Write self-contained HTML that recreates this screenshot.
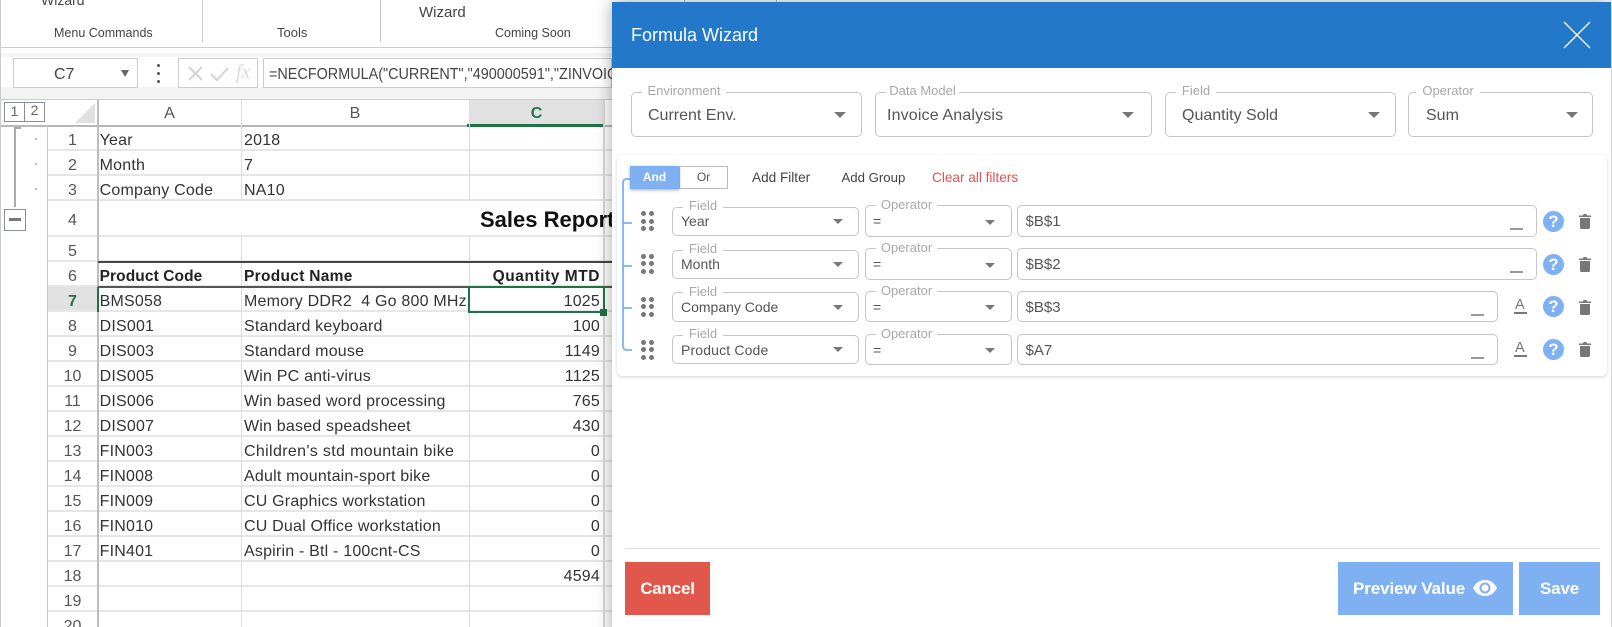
<!DOCTYPE html>
<html><head><meta charset="utf-8"><style>
html{margin:0;padding:0;background:#fff;overflow:hidden;width:1612px;height:627px}
body{margin:0;padding:0;background:#fff;position:relative;width:1612px;height:627px;overflow:hidden;font-family:"Liberation Sans",sans-serif;color:#333}
#w{position:absolute;left:0;top:0;width:1612px;height:627px;overflow:hidden}
.x{position:absolute}
.t{position:absolute;white-space:pre;line-height:1}
.r{position:absolute;left:48px;width:564px;height:25px;line-height:29px;border-bottom:2px solid #e6e6e6;box-sizing:border-box;font-size:16px;letter-spacing:.2px;color:#333}
.r span{position:absolute;white-space:pre;top:0}
.n{left:0;width:49px;text-align:center;color:#555;letter-spacing:0}
.a{left:51.6px}.b{left:196px}.c{right:12px;text-align:right}
.hb{font-weight:bold;font-size:15.5px;letter-spacing:.05px;color:#222}
.box{position:absolute;border:1.5px solid #c6c6c6;border-radius:5px;box-sizing:border-box;background:#fff}
.lb{position:absolute;background:#fff;color:#a8a8a8;font-size:13px;line-height:14px;white-space:pre;text-align:center;height:10px}
.lb i{font-style:normal;position:relative;top:-1px}
.lb.top i{top:-2px}
.v{position:absolute;white-space:pre;color:#555;line-height:1}
.ar{position:absolute;width:0;height:0;border-left:6px solid transparent;border-right:6px solid transparent;border-top:6px solid #777}
.sa{border-left-width:5.5px;border-right-width:5.5px;border-top-width:5.5px}
.d{position:absolute;width:5px;height:5px;border-radius:50%;background:#777}
.us{position:absolute;width:13px;height:2px;background:#999}
.lk{position:absolute;white-space:pre;font-size:13.6px;line-height:1;color:#444}
.btn{position:absolute;color:#fff;font-weight:bold;font-size:17px;line-height:53px;text-align:center;top:562px;height:53px;letter-spacing:-.2px}
.h{position:absolute;text-align:center;line-height:30px;font-size:16px;color:#555;top:99px;height:27px}
.q{position:absolute;left:1543px;width:21px;height:21px;border-radius:50%;background:#7eb0f2;color:#fff;font-size:17px;font-weight:bold;line-height:21px;text-align:center}
</style></head><body><div id="w">

<!-- ribbon -->
<div class="x" style="left:0;top:0;width:1px;height:627px;background:#ccc"></div>
<div class="x" style="left:202px;top:0;width:1px;height:42px;background:#c8c8c8"></div>
<div class="x" style="left:380px;top:0;width:1px;height:42px;background:#c8c8c8"></div>
<div class="x" style="left:0;top:47px;width:612px;height:1px;background:#ccc"></div>
<div class="t" style="left:41px;top:-7px;font-size:14px;color:#444">Wizard</div>
<div class="t" style="left:419px;top:5px;font-size:15px;color:#444">Wizard</div>
<div class="t" style="left:54px;top:27px;font-size:12.5px;color:#444">Menu Commands</div>
<div class="t" style="left:277px;top:26px;font-size:13px;color:#444">Tools</div>
<div class="t" style="left:495px;top:27px;font-size:12.5px;color:#444">Coming Soon</div>

<!-- formula bar -->
<div class="x" style="left:1px;top:53px;width:611px;height:4px;background:#f5f5f5"></div>
<div class="x" style="left:1px;top:87px;width:611px;height:12px;background:#f3f3f3"></div>
<div class="x" style="left:1px;top:99px;width:611px;height:1px;background:#ccc"></div>
<div class="x" style="left:13px;top:58px;width:125px;height:30px;border:1px solid #ccc;box-sizing:border-box"></div>
<div class="t" style="left:54px;top:67px;font-size:16px;color:#444">C7</div>
<div class="ar" style="left:121px;top:70px;border-left-width:4.5px;border-right-width:4.5px;border-top-width:7px;border-top-color:#666"></div>
<div class="d" style="left:156.5px;top:63.5px;width:3px;height:3px;background:#555"></div>
<div class="d" style="left:156.5px;top:71.5px;width:3px;height:3px;background:#555"></div>
<div class="d" style="left:156.5px;top:79.5px;width:3px;height:3px;background:#555"></div>
<div class="x" style="left:178px;top:58px;width:80px;height:30px;border:1px solid #ccc;box-sizing:border-box"></div>
<svg class="x" style="left:178px;top:58px" width="80" height="30"><path d="M11 9l13 13M24 9L11 22" stroke="#d4d4d4" stroke-width="2" fill="none"/><path d="M33 16l6 6 11-12" stroke="#d4d4d4" stroke-width="2" fill="none"/></svg>
<div class="t" style="left:236px;top:62px;font-size:20px;font-family:'Liberation Serif',serif;font-style:italic;color:#d3dbe6">fx</div>
<div class="x" style="left:263px;top:58px;width:349px;height:30px;border:1px solid #ccc;box-sizing:border-box"></div>
<div class="t" style="left:268.5px;top:65.5px;font-size:16px;color:#444;width:385px;overflow:hidden;line-height:18px;transform:scaleX(.9);transform-origin:0 0">=NECFORMULA("CURRENT","490000591","ZINVOICE</div>

<!-- grid header -->
<div class="x" style="left:4px;top:102px;width:21px;height:20px;border:1px solid #8a8f96;box-sizing:border-box;text-align:center;font-size:14px;line-height:17px;color:#666">1</div>
<div class="x" style="left:24px;top:102px;width:21px;height:20px;border:1px solid #8a8f96;box-sizing:border-box;text-align:center;font-size:14px;line-height:15px;color:#666">2</div>
<svg class="x" style="left:48px;top:100px" width="48" height="26"><path d="M47 3V23H27z" fill="#e0e0e0"/></svg>
<div class="x" style="left:469px;top:100px;width:135px;height:25px;background:#e1e1e1"></div>
<div class="h" style="left:98px;width:143px">A</div>
<div class="h" style="left:241px;width:228px">B</div>
<div class="h" style="left:469px;width:135px;font-weight:bold;color:#217346">C</div>
<div class="x" style="left:1px;top:125px;width:611px;height:1.5px;background:#b8b8b8"></div>
<div class="x" style="left:467px;top:124px;width:137px;height:2.5px;background:#217346"></div>

<!-- rows -->
<div class="r" style="top:126px"><span class="n">1</span><span class="a">Year</span><span class="b">2018</span></div>
<div class="r" style="top:151px"><span class="n">2</span><span class="a">Month</span><span class="b">7</span></div>
<div class="r" style="top:176px"><span class="n">3</span><span class="a">Company Code</span><span class="b">NA10</span></div>
<div class="r" style="top:201px;height:36px;line-height:40px"><span class="n">4</span></div>
<div class="r" style="top:237px"><span class="n">5</span></div>
<div class="r" style="top:262px"><span class="n">6</span><span class="a hb" style="letter-spacing:.1px">Product Code</span><span class="b hb" style="letter-spacing:.3px">Product Name</span><span class="c hb" style="letter-spacing:.55px">Quantity MTD</span></div>
<div class="x" style="left:48px;top:287px;width:49px;height:25px;background:#e1e1e1"></div>
<div class="r" style="top:287px"><span class="n" style="font-weight:bold;color:#217346">7</span><span class="a">BMS058</span><span class="b">Memory DDR2  4 Go 800 MHz</span><span class="c">1025</span></div>
<div class="r" style="top:312px"><span class="n">8</span><span class="a">DIS001</span><span class="b">Standard keyboard</span><span class="c">100</span></div>
<div class="r" style="top:337px"><span class="n">9</span><span class="a">DIS003</span><span class="b">Standard mouse</span><span class="c">1149</span></div>
<div class="r" style="top:362px"><span class="n">10</span><span class="a">DIS005</span><span class="b">Win PC anti-virus</span><span class="c">1125</span></div>
<div class="r" style="top:387px"><span class="n">11</span><span class="a">DIS006</span><span class="b">Win based word processing</span><span class="c">765</span></div>
<div class="r" style="top:412px"><span class="n">12</span><span class="a">DIS007</span><span class="b">Win based speadsheet</span><span class="c">430</span></div>
<div class="r" style="top:437px"><span class="n">13</span><span class="a">FIN003</span><span class="b" style="letter-spacing:.35px">Children's std mountain bike</span><span class="c">0</span></div>
<div class="r" style="top:462px"><span class="n">14</span><span class="a">FIN008</span><span class="b">Adult mountain-sport bike</span><span class="c">0</span></div>
<div class="r" style="top:487px"><span class="n">15</span><span class="a">FIN009</span><span class="b">CU Graphics workstation</span><span class="c">0</span></div>
<div class="r" style="top:512px"><span class="n">16</span><span class="a">FIN010</span><span class="b">CU Dual Office workstation</span><span class="c">0</span></div>
<div class="r" style="top:537px"><span class="n">17</span><span class="a">FIN401</span><span class="b">Aspirin - Btl - 100cnt-CS</span><span class="c">0</span></div>
<div class="r" style="top:562px"><span class="n">18</span><span class="c">4594</span></div>
<div class="r" style="top:587px"><span class="n">19</span></div>
<div class="r" style="top:612px"><span class="n">20</span></div>

<!-- grid verticals -->
<div class="x" style="left:47px;top:126px;width:1px;height:501px;background:#c8c8c8"></div>
<div class="x" style="left:97px;top:100px;width:1.5px;height:527px;background:#bdbdbd"></div>
<div class="x" style="left:241px;top:100px;width:1px;height:101px;background:#dcdcdc"></div>
<div class="x" style="left:241px;top:237px;width:1px;height:390px;background:#dcdcdc"></div>
<div class="x" style="left:469px;top:100px;width:1px;height:101px;background:#dcdcdc"></div>
<div class="x" style="left:469px;top:237px;width:1px;height:390px;background:#dcdcdc"></div>
<div class="x" style="left:603px;top:100px;width:2px;height:527px;background:#d8d8d8"></div>
<div class="x" style="left:98px;top:261px;width:514px;height:2px;background:#444"></div>
<div class="x" style="left:98px;top:286px;width:514px;height:2px;background:#555"></div>
<div class="t" style="left:480px;top:209px;font-size:22px;font-weight:bold;color:#111">Sales Report</div>
<div class="x" style="left:97px;top:287px;width:2px;height:25px;background:#217346"></div>
<div class="x" style="left:467.5px;top:286px;width:137px;height:27px;border:2px solid #217346;box-sizing:border-box"></div>
<div class="x" style="left:600px;top:309px;width:7px;height:7px;background:#217346"></div>

<!-- outline -->
<div class="x" style="left:14px;top:127px;width:2px;height:80px;background:#aaa"></div>
<div class="x" style="left:14px;top:127px;width:7px;height:2px;background:#aaa"></div>
<div class="x" style="left:35px;top:138px;width:2px;height:2px;background:#bbb"></div>
<div class="x" style="left:35px;top:163px;width:2px;height:2px;background:#bbb"></div>
<div class="x" style="left:35px;top:188px;width:2px;height:2px;background:#bbb"></div>
<div class="x" style="left:4px;top:209px;width:22px;height:22px;border:1px solid #8a8f96;box-sizing:border-box"></div>
<div class="x" style="left:9px;top:218px;width:12px;height:3px;background:#777"></div>

<!-- panel -->
<div class="x" style="left:684px;top:0;width:1px;height:2px;background:#bbb"></div>
<div class="x" style="left:776px;top:0;width:1px;height:2px;background:#bbb"></div>
<div class="x" style="left:612px;top:2px;width:999px;height:640px;background:#fff;box-shadow:0 0 16px rgba(0,0,0,.35)"></div>
<div class="x" style="left:612px;top:2px;width:999px;height:66px;background:#2378c9"></div>
<div class="t" style="left:631px;top:26px;font-size:18px;color:#fff">Formula Wizard</div>
<svg class="x" style="left:1562px;top:20px" width="30" height="30"><path d="M2 2l26 26M28 2L2 28" stroke="#fff" stroke-width="1.3" fill="none"/></svg>

<!-- top selects -->
<div class="box" style="left:631px;top:92px;width:231px;height:45px"></div>
<div class="lb top" style="left:642px;top:86px;width:84px"><i>Environment</i></div>
<div class="v" style="left:648px;top:108px;font-size:16px">Current Env.</div>
<div class="ar" style="left:834px;top:111.5px"></div>
<div class="box" style="left:875px;top:92px;width:277px;height:45px"></div>
<div class="lb top" style="left:886px;top:86px;width:73px"><i>Data Model</i></div>
<div class="v" style="left:887px;top:108px;font-size:16px;letter-spacing:.15px">Invoice Analysis</div>
<div class="ar" style="left:1122px;top:111.5px"></div>
<div class="box" style="left:1165px;top:92px;width:231px;height:45px"></div>
<div class="lb top" style="left:1176px;top:86px;width:40px"><i>Field</i></div>
<div class="v" style="left:1182px;top:108px;font-size:16px">Quantity Sold</div>
<div class="ar" style="left:1368px;top:111.5px"></div>
<div class="box" style="left:1408px;top:92px;width:185px;height:45px"></div>
<div class="lb top" style="left:1416px;top:86px;width:64px"><i>Operator</i></div>
<div class="v" style="left:1426px;top:108px;font-size:16px">Sum</div>
<div class="ar" style="left:1566px;top:111.5px"></div>

<!-- filter card -->
<div class="x" style="left:617px;top:155px;width:990px;height:221px;border-radius:5px;background:#fff;box-shadow:0 1px 3px rgba(0,0,0,.18)"></div>
<svg class="x" style="left:618px;top:172px" width="20" height="184"><path d="M13 7H9Q5 7 5 11V174Q5 178 9 178H14M5 51H14M5 94H14M5 136H14" stroke="#7eb0f2" stroke-width="1.8" fill="none"/></svg>
<div class="x" style="left:679px;top:166px;width:49px;height:23px;border:1px solid #bbb;box-sizing:border-box;text-align:center;font-size:12px;line-height:21px;color:#555">Or</div>
<div class="x" style="left:630px;top:166px;width:49px;height:23px;background:#7eb0f2;box-shadow:0 1px 3px rgba(0,0,0,.35);text-align:center;font-size:12px;font-weight:bold;line-height:23px;color:#fff">And</div>
<div class="lk" style="left:752px;top:170.5px">Add Filter</div>
<div class="lk" style="left:841.5px;top:170.5px;font-size:13.2px">Add Group</div>
<div class="lk" style="left:932px;top:170.5px;color:#e8504f">Clear all filters</div>

<!-- row 1 -->
<div class="d" style="left:640.5px;top:210.5px"></div><div class="d" style="left:648.5px;top:210.5px"></div><div class="d" style="left:640.5px;top:218.5px"></div><div class="d" style="left:648.5px;top:218.5px"></div><div class="d" style="left:640.5px;top:226px"></div><div class="d" style="left:648.5px;top:226px"></div>
<div class="box" style="left:672px;top:207px;width:187px;height:29px"></div>
<div class="lb" style="left:683px;top:200px;width:40px"><i>Field</i></div>
<div class="v" style="left:681px;top:214px;font-size:14px">Year</div>
<div class="ar sa" style="left:832.5px;top:219px"></div>
<div class="box" style="left:865px;top:205px;width:147px;height:32px"></div>
<div class="lb" style="left:876px;top:199px;width:61px"><i>Operator</i></div>
<div class="v" style="left:873px;top:214px;font-size:14px">=</div>
<div class="ar sa" style="left:984.5px;top:219.5px"></div>
<div class="box" style="left:1017px;top:205px;width:520px;height:32px"></div>
<div class="v" style="left:1025.5px;top:214px;font-size:15px">$B$1</div>
<div class="us" style="left:1510px;top:228px"></div>

<!-- row 2 -->
<div class="d" style="left:640.5px;top:253.5px"></div><div class="d" style="left:648.5px;top:253.5px"></div><div class="d" style="left:640.5px;top:261px"></div><div class="d" style="left:648.5px;top:261px"></div><div class="d" style="left:640.5px;top:268.5px"></div><div class="d" style="left:648.5px;top:268.5px"></div>
<div class="box" style="left:672px;top:250px;width:187px;height:29px"></div>
<div class="lb" style="left:683px;top:243px;width:40px"><i>Field</i></div>
<div class="v" style="left:681px;top:257px;font-size:14px">Month</div>
<div class="ar sa" style="left:832.5px;top:262px"></div>
<div class="box" style="left:865px;top:248px;width:147px;height:32px"></div>
<div class="lb" style="left:876px;top:242px;width:61px"><i>Operator</i></div>
<div class="v" style="left:873px;top:257px;font-size:14px">=</div>
<div class="ar sa" style="left:984.5px;top:262.5px"></div>
<div class="box" style="left:1017px;top:248px;width:520px;height:32px"></div>
<div class="v" style="left:1025.5px;top:257px;font-size:15px">$B$2</div>
<div class="us" style="left:1510px;top:271px"></div>

<!-- row 3 -->
<div class="d" style="left:640.5px;top:296.5px"></div><div class="d" style="left:648.5px;top:296.5px"></div><div class="d" style="left:640.5px;top:304px"></div><div class="d" style="left:648.5px;top:304px"></div><div class="d" style="left:640.5px;top:311.5px"></div><div class="d" style="left:648.5px;top:311.5px"></div>
<div class="box" style="left:672px;top:292px;width:187px;height:30px"></div>
<div class="lb" style="left:683px;top:286px;width:40px"><i>Field</i></div>
<div class="v" style="left:681px;top:300px;font-size:14px">Company Code</div>
<div class="ar sa" style="left:832.5px;top:305px"></div>
<div class="box" style="left:865px;top:291px;width:147px;height:31px"></div>
<div class="lb" style="left:876px;top:285px;width:61px"><i>Operator</i></div>
<div class="v" style="left:873px;top:300px;font-size:14px">=</div>
<div class="ar sa" style="left:984.5px;top:305px"></div>
<div class="box" style="left:1017px;top:291px;width:481px;height:31px"></div>
<div class="v" style="left:1025.5px;top:300px;font-size:15px">$B$3</div>
<div class="us" style="left:1471px;top:314px"></div>

<!-- row 4 -->
<div class="d" style="left:640.5px;top:339.5px"></div><div class="d" style="left:648.5px;top:339.5px"></div><div class="d" style="left:640.5px;top:347px"></div><div class="d" style="left:648.5px;top:347px"></div><div class="d" style="left:640.5px;top:354.5px"></div><div class="d" style="left:648.5px;top:354.5px"></div>
<div class="box" style="left:672px;top:335px;width:187px;height:29px"></div>
<div class="lb" style="left:683px;top:328px;width:40px"><i>Field</i></div>
<div class="v" style="left:681px;top:343px;font-size:14px;letter-spacing:.15px">Product Code</div>
<div class="ar sa" style="left:832.5px;top:347px"></div>
<div class="box" style="left:865px;top:334px;width:147px;height:31px"></div>
<div class="lb" style="left:876px;top:328px;width:61px"><i>Operator</i></div>
<div class="v" style="left:873px;top:343px;font-size:14px">=</div>
<div class="ar sa" style="left:984.5px;top:347.5px"></div>
<div class="box" style="left:1017px;top:334px;width:481px;height:31px"></div>
<div class="v" style="left:1025.5px;top:343px;font-size:15px">$A7</div>
<div class="us" style="left:1471px;top:357px"></div>

<!-- A icons -->
<div class="t" style="left:1515px;top:298px;font-size:14.5px;color:#777">A</div><div class="x" style="left:1514px;top:312px;width:13px;height:1.5px;background:#777"></div>
<div class="t" style="left:1515px;top:341px;font-size:14.5px;color:#777">A</div><div class="x" style="left:1514px;top:355px;width:13px;height:1.5px;background:#777"></div>

<!-- help icons -->
<div class="q" style="top:211px">?</div>
<div class="q" style="top:254px">?</div>
<div class="q" style="top:296px">?</div>
<div class="q" style="top:339px">?</div>

<!-- trash icons -->
<svg class="x" style="left:1579px;top:213px" width="12" height="16"><path d="M0 2.5H4L4.5 1H7.5L8 2.5H12V4H0zM1 5H11V14.5Q11 16 9.5 16H2.5Q1 16 1 14.5z" fill="#777"/></svg>
<svg class="x" style="left:1579px;top:256px" width="12" height="16"><path d="M0 2.5H4L4.5 1H7.5L8 2.5H12V4H0zM1 5H11V14.5Q11 16 9.5 16H2.5Q1 16 1 14.5z" fill="#777"/></svg>
<svg class="x" style="left:1579px;top:299px" width="12" height="16"><path d="M0 2.5H4L4.5 1H7.5L8 2.5H12V4H0zM1 5H11V14.5Q11 16 9.5 16H2.5Q1 16 1 14.5z" fill="#777"/></svg>
<svg class="x" style="left:1579px;top:341px" width="12" height="16"><path d="M0 2.5H4L4.5 1H7.5L8 2.5H12V4H0zM1 5H11V14.5Q11 16 9.5 16H2.5Q1 16 1 14.5z" fill="#777"/></svg>

<!-- footer -->
<div class="x" style="left:625px;top:548px;width:975px;height:1px;background:#e0e0e0"></div>
<div class="btn" style="left:625px;width:85px;background:#e2574c">Cancel</div>
<div class="btn" style="left:1338px;width:175px;background:#7eb0f2;text-align:left;text-indent:15px;letter-spacing:-.1px">Preview Value</div>
<svg class="x" style="left:1473px;top:579px" width="24" height="18"><path d="M0 9C3 3.5 7 1 12 1S21 3.5 24 9C21 14.5 17 17 12 17S3 14.5 0 9z" fill="#fff"/><circle cx="12" cy="9" r="5.5" fill="#7eb0f2"/><circle cx="12" cy="9" r="3.5" fill="#fff"/></svg>
<div class="btn" style="left:1519px;width:81px;background:#7eb0f2">Save</div>
</div></body></html>
